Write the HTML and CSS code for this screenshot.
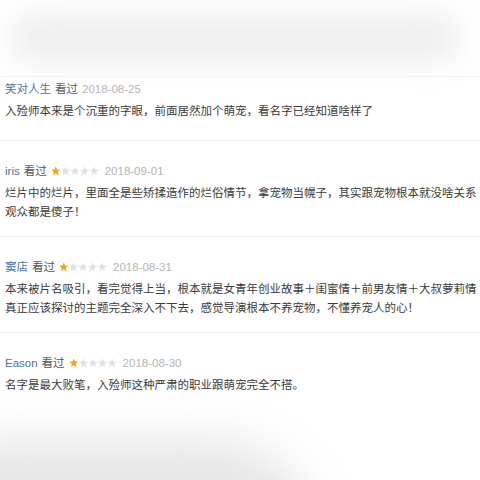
FILE: index.html
```html
<!DOCTYPE html>
<html lang="zh-CN">
<head>
  <meta charset="UTF-8" />
  <meta name="viewport" content="width=device-width, initial-scale=1.0" />
  <title>短评</title>
  <link rel="stylesheet" href="styles.css">
</head>
<body>
  <div id="page">
    <!-- blurred top of the screenshot -->
    <div class="fade-top"><div class="fade-top-blob"></div></div>

    <div class="comment comment-first">
      <div class="meta">
        <span class="user">笑对人生</span>
        <span class="seen">看过</span>
        <span class="date">2018-08-25</span>
      </div>
      <p class="text">入殓师本来是个沉重的字眼，前面居然加个萌宠，看名字已经知道啥样了</p>
    </div>

    <div class="comment">
      <div class="meta">
        <span class="user">iris</span>
        <span class="seen">看过</span>
        <svg class="stars" viewBox="0 0 50 10" width="48" height="10">
          <use href="#star" x="0" class="on"/>
          <use href="#star" x="10"/>
          <use href="#star" x="20"/>
          <use href="#star" x="30"/>
          <use href="#star" x="40"/>
        </svg>
        <span class="date">2018-09-01</span>
      </div>
      <p class="text">烂片中的烂片，里面全是些矫揉造作的烂俗情节，拿宠物当幌子，其实跟宠物根本就没啥关系</p>
      <p class="text">观众都是傻子！</p>
    </div>

    <div class="comment">
      <div class="meta">
        <span class="user">窦店</span>
        <span class="seen">看过</span>
        <svg class="stars" viewBox="0 0 50 10" width="48" height="10">
          <use href="#star" x="0" class="on"/>
          <use href="#star" x="10"/>
          <use href="#star" x="20"/>
          <use href="#star" x="30"/>
          <use href="#star" x="40"/>
        </svg>
        <span class="date">2018-08-31</span>
      </div>
      <p class="text">本来被片名吸引，看完觉得上当，根本就是女青年创业故事＋闺蜜情＋前男友情＋大叔萝莉情</p>
      <p class="text">真正应该探讨的主题完全深入不下去，感觉导演根本不养宠物，不懂养宠人的心！</p>
    </div>

    <div class="comment comment-last">
      <div class="meta">
        <span class="user">Eason</span>
        <span class="seen">看过</span>
        <svg class="stars" viewBox="0 0 50 10" width="48" height="10">
          <use href="#star" x="0" class="on"/>
          <use href="#star" x="10"/>
          <use href="#star" x="20"/>
          <use href="#star" x="30"/>
          <use href="#star" x="40"/>
        </svg>
        <span class="date">2018-08-30</span>
      </div>
      <p class="text">名字是最大败笔，入殓师这种严肃的职业跟萌宠完全不搭。</p>
    </div>

    <!-- blurred bottom of the screenshot -->
    <div class="fade-bottom"><div class="fade-bottom-blob"></div></div>
  </div>

  <svg width="0" height="0" class="defs">
    <defs>
      <polygon id="star" points="5,0.3 6.3,3.5 9.7,3.7 7.1,5.9 7.9,9.3 5,7.4 2.1,9.3 2.9,5.9 0.3,3.7 3.7,3.5"/>
    </defs>
  </svg>
</body>
</html>
```

FILE: styles.css
```css
:root {
  --link: #4d72a6;
  --text: #3a3a3a;
  --muted: #555;
  --date: #b4b4b4;
  --line: #f0f0f0;
  --star-on: #f5a21b;
  --star-off: #dfe0e4;
}
* {
  box-sizing: border-box;
}
html,
body {
  margin: 0;
  height: 100%;
  overflow: hidden;
  background: #fff;
}
body {
  font-family: "Liberation Sans", Arial, "Noto Sans CJK SC", sans-serif;
  font-size: 11.5px;
  color: var(--text);
}
#page {
  width: 480px;
  height: 480px;
  overflow: hidden;
  display: flex;
  flex-direction: column;
}
/* ---------- BLURRED EDGES ---------- */
.fade-top {
  height: 77px;
  flex: none;
  padding: 14px 20px 0 10px;
  border-bottom: 1px solid #f6f6f6;
}
.fade-top-blob {
  height: 48px;
  background: #ededed;
  border-radius: 24px;
  filter: blur(16px);
}
.fade-bottom {
  flex: 1;
  padding: 30px 0 0 0;
}
.fade-bottom-blob {
  width: 380px;
  height: 110px;
  margin-left: -60px;
  background: #e6e6e6;
  border-radius: 60px 120px 0 0;
  filter: blur(24px);
}
/* ---------- COMMENTS ---------- */
.comment {
  padding: 20px 5px 14px;
  border-bottom: 1px solid var(--line);
  flex: none;
}
.comment-first {
  padding-top: 2px;
  padding-bottom: 19px;
}
.comment-last {
  border-bottom: 0;
}
.meta {
  display: flex;
  align-items: center;
  height: 20px;
  line-height: 20px;
  white-space: nowrap;
}
.user {
  color: var(--link);
  margin-right: 4px;
}
.seen {
  color: var(--muted);
  margin-right: 4px;
}
.stars {
  display: block;
  margin-right: 6px;
  fill: var(--star-off);
}
.stars .on {
  fill: var(--star-on);
}
.date {
  color: var(--date);
}
.text {
  margin: 3px 0 0;
  line-height: 19px;
  white-space: nowrap;
}
.text + .text {
  margin-top: 0;
}
.defs {
  position: absolute;
}
```
